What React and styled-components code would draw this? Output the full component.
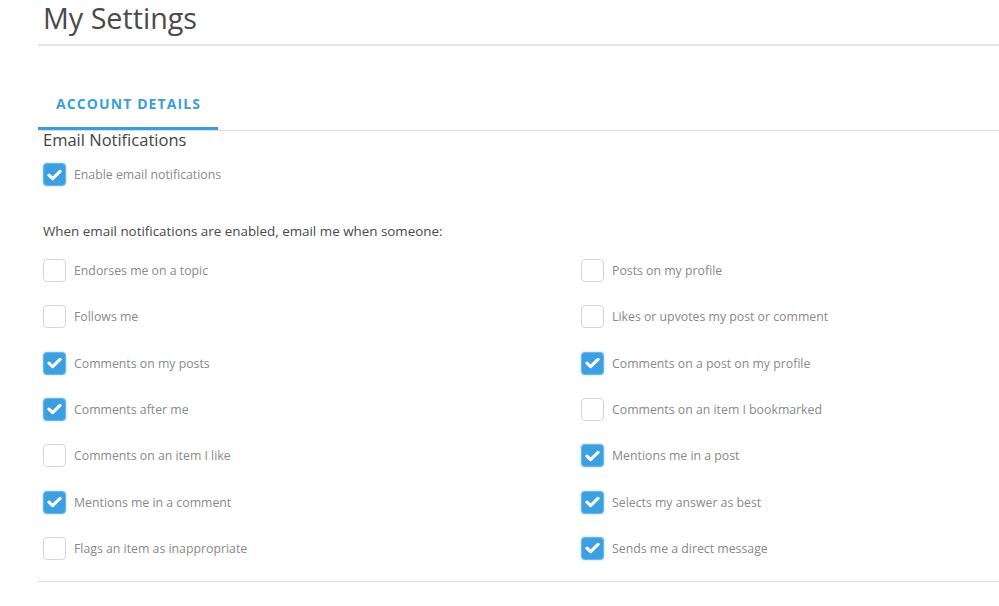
import styled, { createGlobalStyle } from "styled-components";

const GlobalStyle = createGlobalStyle`
  body {
    margin: 0;
    background: #fff;
    font-family: "Open Sans", "Liberation Sans", sans-serif;
  }
`;

const Page = styled.div`
  margin-left: 38px;
`;

const Header = styled.div`
  padding: 0 0 8px 5px;
  border-bottom: 2px solid #e6e6e6;
`;

const Title = styled.h1`
  margin: 0;
  font-size: 28.7px;
  line-height: 36px;
  font-weight: 400;
  color: #4a4a4a;
`;

const TabBar = styled.div`
  display: flex;
  margin-top: 37px;
  border-bottom: 1px solid #dcdcdc;
`;

const Tab = styled.div`
  padding: 12px 17px 14px 18px;
  font-size: 14px;
  line-height: 18px;
  font-weight: 700;
  letter-spacing: 1.1px;
  color: #3a9fd6;
  border-bottom: 3px solid ${(p) => (p.$active ? "#3a9fd6" : "transparent")};
`;

const Section = styled.div`
  padding-left: 5px;
  border-bottom: 1px solid #dcdcdc;
  padding-bottom: 21px;
`;

const Heading = styled.h2`
  margin: 0;
  font-size: 16.5px;
  line-height: 18px;
  font-weight: 400;
  color: #444;
`;

const Intro = styled.p`
  margin: 35px 0 18px;
  font-size: 13.4px;
  line-height: 20px;
  color: #4a4a4a;
`;

const Grid = styled.div`
  display: grid;
  grid-template-columns: 538px 1fr;
  grid-auto-rows: 23px;
  row-gap: 23.33px;
`;

const Row = styled.label`
  display: flex;
  align-items: center;
  gap: 8px;
  height: 23px;
  margin-top: ${(p) => p.$top || 0}px;
`;

const Box = styled.span`
  box-sizing: border-box;
  width: 23px;
  height: 23px;
  flex: none;
  border-radius: 4px;
  display: flex;
  align-items: center;
  justify-content: center;
  background: ${(p) => (p.$checked ? "#3b9fe0" : "#fff")};
  border: 1px solid ${(p) => (p.$checked ? "#6bb8ea" : "#d6d6d6")};
  box-shadow: ${(p) => (p.$checked ? "0 0 2px rgba(59,159,224,0.6)" : "none")};
`;

const Label = styled.span`
  font-size: 12.3px;
  color: #8a8a8a;
`;

const Check = ({ checked }) => (
  <Box $checked={checked}>
    {checked && (
      <svg width="15" height="12" viewBox="0 0 15 12">
        <path d="M2 6.2 L5.6 9.6 L13 2.4" fill="none" stroke="#fff" strokeWidth="3.2" strokeLinecap="round" strokeLinejoin="round" />
      </svg>
    )}
  </Box>
);

const options = [
  ["Endorses me on a topic", false],
  ["Posts on my profile", false],
  ["Follows me", false],
  ["Likes or upvotes my post or comment", false],
  ["Comments on my posts", true],
  ["Comments on a post on my profile", true],
  ["Comments after me", true],
  ["Comments on an item I bookmarked", false],
  ["Comments on an item I like", false],
  ["Mentions me in a post", true],
  ["Mentions me in a comment", true],
  ["Selects my answer as best", true],
  ["Flags an item as inappropriate", false],
  ["Sends me a direct message", true],
];

export default function App() {
  return (
    <>
      <GlobalStyle />
      <Page>
        <Header>
          <Title>My Settings</Title>
        </Header>
        <TabBar>
          <Tab $active>ACCOUNT DETAILS</Tab>
        </TabBar>
        <Section>
          <Heading>Email Notifications</Heading>
          <Row $top={14}>
            <Check checked />
            <Label>Enable email notifications</Label>
          </Row>
          <Intro>When email notifications are enabled, email me when someone:</Intro>
          <Grid>
            {options.map(([text, checked]) => (
              <Row key={text}>
                <Check checked={checked} />
                <Label>{text}</Label>
              </Row>
            ))}
          </Grid>
        </Section>
      </Page>
    </>
  );
}
